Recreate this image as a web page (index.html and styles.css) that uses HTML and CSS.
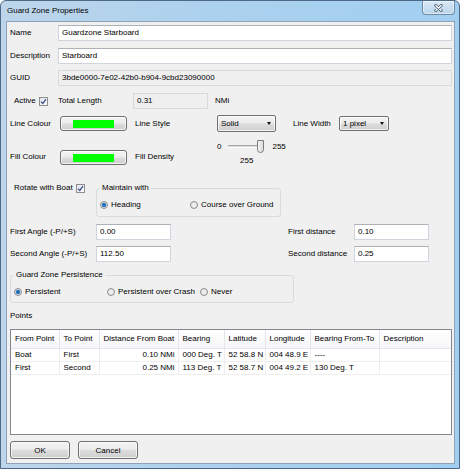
FILE: index.html
```html
<!DOCTYPE html>
<html>
<head>
<meta charset="utf-8">
<link rel="stylesheet" href="styles.css">
</head>
<body>
<div class="window">
  <div class="titlebar">
    <span class="title">Guard Zone Properties</span>
    <div class="close">
      <svg width="9" height="8" viewBox="0 0 9 8"><path d="M1.8 1.5 L7.2 6.5 M7.2 1.5 L1.8 6.5" stroke="#4a5d72" stroke-width="3" stroke-linecap="round" fill="none"/><path d="M1.8 1.5 L7.2 6.5 M7.2 1.5 L1.8 6.5" stroke="#ffffff" stroke-width="1.3" stroke-linecap="round" fill="none"/></svg>
    </div>
  </div>
  <div class="client">
    <div class="row r16">
      <span class="lbl w48">Name</span>
      <div class="tb grow">Guardzone Starboard</div>
    </div>
    <div class="row r16 mt7">
      <span class="lbl w48">Description</span>
      <div class="tb grow">Starboard</div>
    </div>
    <div class="row r16 mt6">
      <span class="lbl w48">GUID</span>
      <div class="tb ro grow">3bde0000-7e02-42b0-b904-9cbd23090000</div>
    </div>
    <div class="row r16 mt7">
      <div class="cbcell w48"><span>Active</span><span class="cb"><svg width="7" height="7" viewBox="0 0 7 7"><path d="M1 3.6 L2.8 5.4 L6 1.2" stroke="#3a4f8c" stroke-width="1.3" fill="none"/></svg></span></div>
      <span class="lbl w75">Total Length</span>
      <div class="tb ro w75">0.31</div>
      <span class="lbl ml7">NMi</span>
    </div>
    <div class="row r17 mt6">
      <span class="lbl w49">Line Colour</span>
      <div class="btn colbtn"><span class="swatch"></span></div>
      <span class="lbl w82 ml8">Line Style</span>
      <div class="dd w59 h17"><span>Solid</span><span class="arrow"></span></div>
      <span class="lbl w46 ml17">Line Width</span>
      <div class="dd w50 h15"><span>1 pixel</span><span class="arrow"></span></div>
    </div>
    <div class="row fillrow mt8">
      <span class="lbl w49 mt11">Fill Colour</span>
      <div class="btn colbtn mt10"><span class="swatch"></span></div>
      <span class="lbl w82 ml8 mt11">Fill Density</span>
      <div class="slider">
        <div class="sl-top">
          <span class="lbl">0</span>
          <div class="sl-track"><span class="groove"></span><svg class="thumb" width="7" height="13" viewBox="0 0 7 13"><defs><linearGradient id="tg" x1="0" y1="0" x2="1" y2="0"><stop offset="0" stop-color="#f6f6f6"/><stop offset="1" stop-color="#d8d8d8"/></linearGradient></defs><path d="M0.5 0.5 H6.5 V9.5 Q6.5 12.5 3.5 12.5 Q0.5 12.5 0.5 9.5 Z" fill="url(#tg)" stroke="#7d7d7d" stroke-width="1"/></svg></div>
          <span class="lbl">255</span>
        </div>
        <div class="sl-val">255</div>
      </div>
    </div>
    <div class="row rotrow">
      <div class="cbcell w86 h12"><span>Rotate with Boat</span><span class="cb"><svg width="7" height="7" viewBox="0 0 7 7"><path d="M1 3.6 L2.8 5.4 L6 1.2" stroke="#3a4f8c" stroke-width="1.3" fill="none"/></svg></span></div>
      <div class="gbox gb-maintain">
        <span class="gb-label">Maintain with</span>
        <div class="gb-radios">
          <div class="ritem w90"><span class="rd on"></span><span>Heading</span></div>
          <div class="ritem"><span class="rd"></span><span>Course over Ground</span></div>
        </div>
      </div>
    </div>
    <div class="row r16 mt7">
      <span class="lbl w86">First Angle (-P/+S)</span>
      <div class="tb w75">0.00</div>
      <span class="lbl w66 ml117">First distance</span>
      <div class="tb w75">0.10</div>
    </div>
    <div class="row r16 mt6">
      <span class="lbl w86">Second Angle (-P/+S)</span>
      <div class="tb w75">112.50</div>
      <span class="lbl w66 ml117">Second distance</span>
      <div class="tb w75">0.25</div>
    </div>
    <div class="gbox gb-persist">
      <span class="gb-label">Guard Zone Persistence</span>
      <div class="gb-radios">
        <div class="ritem w93"><span class="rd on"></span><span>Persistent</span></div>
        <div class="ritem w93"><span class="rd"></span><span>Persistent over Crash</span></div>
        <div class="ritem"><span class="rd"></span><span>Never</span></div>
      </div>
    </div>
    <div class="points-lbl">Points</div>
    <div class="listwrap">
      <table class="list">
        <colgroup>
          <col class="c1"><col class="c2"><col class="c3"><col class="c4"><col class="c5"><col class="c6"><col class="c7"><col class="c8">
        </colgroup>
        <thead>
          <tr><th>From Point</th><th>To Point</th><th>Distance From Boat</th><th>Bearing</th><th>Latitude</th><th>Longitude</th><th>Bearing From-To</th><th>Description</th></tr>
        </thead>
        <tbody>
          <tr><td>Boat</td><td>First</td><td class="num">0.10 NMi</td><td>000 Deg. T</td><td>52 58.8 N</td><td>004 48.9 E</td><td>----</td><td></td></tr>
          <tr><td>First</td><td>Second</td><td class="num">0.25 NMi</td><td>113 Deg. T</td><td>52 58.7 N</td><td>004 49.2 E</td><td>130 Deg. T</td><td></td></tr>
        </tbody>
      </table>
    </div>
    <div class="row buttons">
      <div class="btn okbtn">OK</div>
      <div class="btn okbtn ml8">Cancel</div>
    </div>
  </div>
</div>
</body>
</html>
```
FILE: styles.css
```css
* { box-sizing: border-box; }
html, body { margin: 0; padding: 0; }
body {
  width: 460px;
  height: 469px;
  overflow: hidden;
  background: #ffffff;
  font-family: "Liberation Sans", Arial, sans-serif;
  font-size: 8px;
  color: #000;
}
.window {
  width: 460px;
  height: 469px;
  display: flex;
  flex-direction: column;
  border: 1px solid #4e6985;
  border-radius: 6px 6px 0 0;
  padding: 0 4px 4px 5px;
  background: linear-gradient(90deg, #bdd5ea 0%, #acd1ee 45%, #a2cff1 100%);
}
.titlebar {
  height: 20px;
  display: flex;
  align-items: flex-start;
}
.title {
  margin-left: 1px;
  line-height: 20px;
  color: #000;
  white-space: nowrap;
}
.close {
  margin-left: auto;
  width: 33px;
  height: 14px;
  border: 1px solid #6f89a6;
  border-top: none;
  border-radius: 0 0 4px 4px;
  background: linear-gradient(#dbe9f6, #b9d4ec);
  box-shadow: inset 0 0 0 1px rgba(255,255,255,0.5);
  display: flex;
  align-items: center;
  justify-content: center;
}
.client {
  flex: 1;
  display: flex;
  flex-direction: column;
  background: #f0f0f0;
  border: 1px solid #8ea3ba;
  padding: 3px 2px 0 3px;
}
.row { display: flex; align-items: center; white-space: nowrap; }
.r16 { height: 16px; }
.r17 { height: 17px; }
.mt6 { margin-top: 6px; }
.mt7 { margin-top: 7px; }
.mt8 { margin-top: 8px; }
.mt10 { margin-top: 10px; }
.mt11 { margin-top: 11px; }
.ml7 { margin-left: 7px; }
.ml8 { margin-left: 8px; }
.ml17 { margin-left: 17px; }
.ml117 { margin-left: 117px; }
.w46 { width: 46px; flex: none; }
.w48 { width: 48px; flex: none; }
.w49 { width: 49px; flex: none; }
.w50 { width: 50px; flex: none; }
.w59 { width: 59px; flex: none; }
.w66 { width: 66px; flex: none; }
.w75 { width: 75px; flex: none; }
.w82 { width: 82px; flex: none; }
.w86 { width: 86px; flex: none; }
.w90 { width: 90px; flex: none; }
.w93 { width: 93px; flex: none; }
.h12 { height: 12px; }
.h15 { height: 15px; }
.h17 { height: 17px; }
.grow { flex: 1; }
.lbl { line-height: 12px; white-space: nowrap; }
.tb {
  height: 16px;
  background: #ffffff;
  border: 1px solid #d0d5dd;
  border-top-color: #aeb1b8;
  padding-left: 3px;
  line-height: 14px;
  white-space: nowrap;
  overflow: hidden;
}
.tb.ro {
  background: #efefef;
  border-color: #d9d9d9;
}
.cbcell {
  display: flex;
  align-items: center;
  padding-left: 4px;
  line-height: 12px;
}
.cbcell .cb { margin-left: 3px; }
.cb {
  width: 9px;
  height: 9px;
  flex: none;
  border: 1px solid #8e8f8f;
  background: linear-gradient(135deg, #dfe3ea 0%, #f7f8fa 70%, #ffffff 100%);
  display: flex;
  align-items: center;
  justify-content: center;
}
.btn {
  border: 1px solid #707070;
  border-radius: 3px;
  background: linear-gradient(#f3f3f3 0%, #ebebeb 48%, #dcdcdc 52%, #cfcfcf 100%);
  box-shadow: inset 0 0 0 1px rgba(255,255,255,0.7);
  display: flex;
  align-items: center;
  justify-content: center;
  color: #000;
}
.colbtn {
  width: 67px;
  height: 15px;
  flex: none;
  margin-left: 1px;
}
.swatch {
  width: 41px;
  height: 8px;
  background: #00ff00;
}
.dd {
  border: 1px solid #707070;
  border-radius: 2px;
  background: linear-gradient(#f3f3f3 0%, #ebebeb 48%, #dcdcdc 52%, #d0d0d0 100%);
  box-shadow: inset 0 0 0 1px rgba(255,255,255,0.7);
  display: flex;
  align-items: center;
  justify-content: space-between;
  padding: 0 4px 0 3px;
  line-height: 12px;
}
.arrow {
  width: 0;
  height: 0;
  border-top: 3px solid #111;
  border-left: 2.5px solid transparent;
  border-right: 2.5px solid transparent;
}
.fillrow {
  height: 26px;
  align-items: flex-start;
}
.slider {
  display: flex;
  flex-direction: column;
  width: 75px;
}
.sl-top {
  height: 13px;
  display: flex;
  align-items: center;
}
.sl-track {
  width: 36px;
  height: 13px;
  margin-left: 7px;
  margin-right: 8px;
  display: flex;
  align-items: center;
}
.groove {
  flex: 1;
  height: 3px;
  border-top: 1px solid #a8a8a8;
  border-bottom: 1px solid #ffffff;
  background: #d6d6d6;
}
.thumb { flex: none; display: block; }
.sl-val {
  margin-top: 2px;
  margin-left: 23px;
  line-height: 12px;
}
.rotrow {
  margin-top: 16px;
  align-items: flex-start;
}
.gbox {
  border: 1px solid #d5dde3;
  border-radius: 3px;
  display: flex;
  flex-direction: column;
  padding: 0 3px 5px 3px;
}
.gb-maintain {
  width: 185px;
  margin-top: 6px;
}
.gb-persist {
  width: 284px;
  margin-top: 13px;
  padding-bottom: 4px;
}
.gb-label {
  align-self: flex-start;
  margin-top: -7px;
  height: 12px;
  line-height: 12px;
  padding: 0 2px;
  background: #f0f0f0;
  white-space: nowrap;
}
.gb-radios {
  margin-top: 5px;
  height: 12px;
  display: flex;
  align-items: center;
  white-space: nowrap;
}
.ritem {
  display: flex;
  align-items: center;
  line-height: 12px;
}
.rd {
  width: 8px;
  height: 8px;
  flex: none;
  margin-right: 3px;
  border-radius: 50%;
  border: 1px solid #8e8f8f;
  background: radial-gradient(circle, #f4f4f4 0%, #dedede 100%);
}
.rd.on {
  background: radial-gradient(circle, #1b5b9c 0, #2f7fcc 1.8px, #d8dde3 2.6px, #f2f2f2 100%);
}
.points-lbl {
  margin-top: 7px;
  height: 12px;
  line-height: 12px;
}
.listwrap {
  margin-top: 7px;
  height: 106px;
  border: 1px solid #828790;
  background: #ffffff;
  overflow: hidden;
}
.list {
  width: 440px;
  table-layout: fixed;
  border-collapse: collapse;
}
.c1 { width: 48px; }
.c2 { width: 40px; }
.c3 { width: 79px; }
.c4 { width: 46px; }
.c5 { width: 41px; }
.c6 { width: 45px; }
.c7 { width: 69px; }
.c8 { width: 72px; }
.list th {
  height: 18px;
  font-weight: normal;
  text-align: left;
  padding: 0 0 0 4px;
  border-right: 1px solid #e3e5e8;
  border-bottom: 1px solid #e3e5e8;
  background: linear-gradient(#ffffff, #f5f6f8);
  white-space: nowrap;
  overflow: hidden;
}
.list td {
  height: 13px;
  padding: 0 0 0 4px;
  border-right: 1px solid #eeeeee;
  border-bottom: 1px solid #eeeeee;
  white-space: nowrap;
  overflow: hidden;
  line-height: 12px;
}
.list td.num {
  text-align: right;
  padding: 0 3px 0 0;
}
.buttons {
  margin-top: 6px;
}
.okbtn {
  width: 60px;
  height: 18px;
}
```
